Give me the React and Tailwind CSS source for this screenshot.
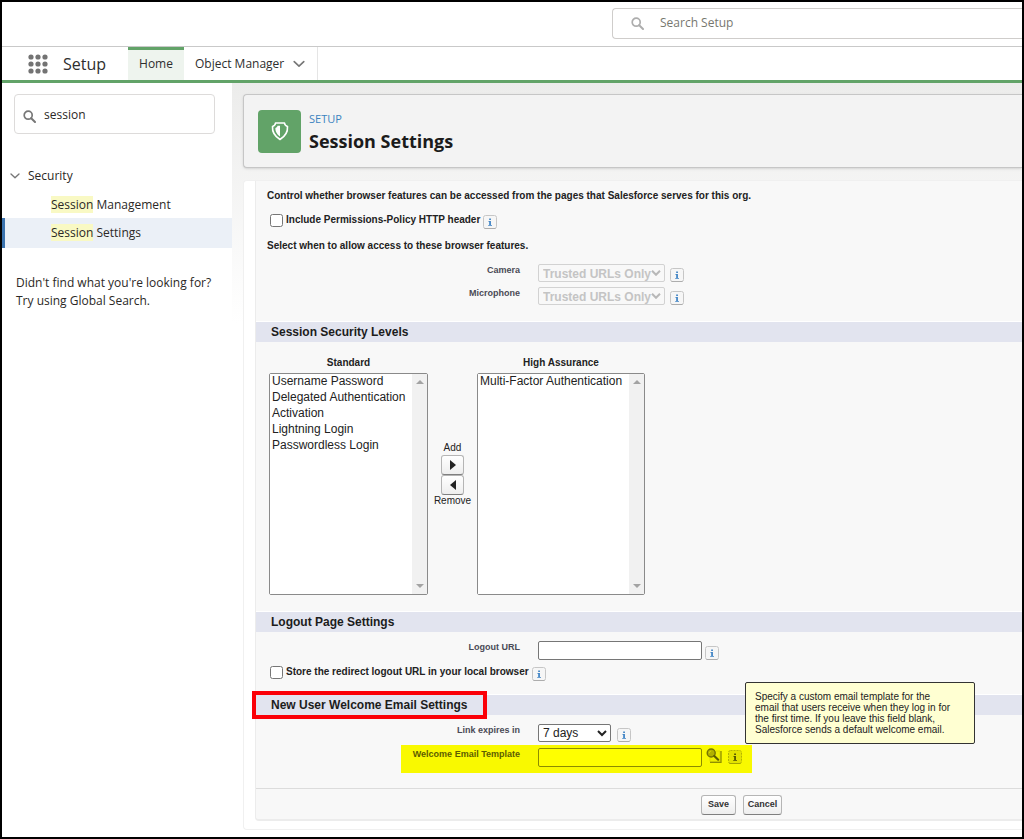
import React from "react";

const GREEN_ICON = "flex size-[43px] shrink-0 items-center justify-center rounded bg-[#62a368]";

function SearchIcon({ className }) {
  return (
    <svg viewBox="0 0 13 13" className={className} fill="none" stroke="currentColor" aria-hidden="true">
      <circle cx="5.2" cy="5.2" r="4" strokeWidth="1.7" />
      <path d="M8.2 8.2 12 12" strokeWidth="2" strokeLinecap="round" />
    </svg>
  );
}

function Chevron({ className }) {
  return (
    <svg viewBox="0 0 12 8" className={className} fill="none" stroke="#767676" strokeWidth="1.6" strokeLinecap="round" strokeLinejoin="round" aria-hidden="true">
      <path d="M1.2 1.6 6 6.2l4.800-4.600" />
    </svg>
  );
}

function InfoIcon({ tinted = false }) {
  return (
    <svg viewBox="0 0 14 14" className="size-3.5 shrink-0" role="img" aria-label="Info">
      <rect x=".5" y=".5" width="13" height="13" rx="2" fill={tinted ? "#e3e300" : "#f6f6f6"} stroke={tinted ? "#b4b400" : "#c6c6c6"} strokeDasharray={tinted ? "2 1" : undefined} />
      <path d="M1.500 13.500h11" stroke={tinted ? "#a5a500" : "#adadad"} />
      <path d="M6.200 3.500h1.700v1.500H6.200zM5.400 6h2.500v4H9v.8H5.200V10h1V6.800h-.8z" fill={tinted ? "#4a4a00" : "#3a80c4"} />
    </svg>
  );
}

function LookupIcon() {
  return (
    <svg viewBox="0 0 16 16" className="size-4 shrink-0" aria-hidden="true">
      <path d="M4 8v5.500h10V3h-4" fill="#eeee00" stroke="#dcdc00" />
      <path d="M4 14.300h11V3" fill="none" stroke="#8f8f00" strokeWidth="1.3" />
      <circle cx="5.200" cy="5" r="4" fill="#b0b000" stroke="#747400" strokeWidth="1.4" />
      <path d="M3.200 5.200a2.200 2.200 0 0 1 2-2.200" fill="none" stroke="#d8d800" />
      <path d="m8.300 8 3.900 3.700" stroke="#5e5e00" strokeWidth="2.200" strokeLinecap="round" />
    </svg>
  );
}

function SectionBar({ children, outlined = false }) {
  return (
    <div className="relative flex h-[21px] items-center border-t border-white bg-[#e2e4ef] pl-[15px]">
      <h2 className="text-xs font-bold text-[#1c1c1c]">{children}</h2>
      {outlined && <div className="absolute -top-[4px] -left-[4px] h-7 w-[235px] border-4 border-[#fb0007]" />}
    </div>
  );
}

function Field({ id, label, children }) {
  return (
    <div className="flex h-[23px] items-start gap-[18px]">
      <label htmlFor={id} className="w-[264px] text-right text-[9px] leading-[12px] font-bold text-[#4a4a56]">{label}</label>
      {children}
    </div>
  );
}

function PermissionSelect({ id }) {
  return (
    <div className="flex items-end gap-[5px]">
      <span className="relative flex">
        <select id={id} disabled className="h-[18px] w-[127px] appearance-none rounded-xs border border-[#d2d2d2] bg-[#f8f8f8] pl-1 text-[12px] font-bold text-[#c4c4c4] opacity-100">
          <option>Trusted URLs Only</option>
        </select>
        <svg viewBox="0 0 10 6" className="pointer-events-none absolute top-1.5 right-1 h-1.5 w-2.5" fill="none" stroke="#b8b8b8" strokeWidth="2" aria-hidden="true">
          <path d="M1 .8l4 4 4-4" />
        </svg>
      </span>
      <InfoIcon />
    </div>
  );
}

function CheckRow({ id, children }) {
  return (
    <div className="flex h-4 items-center pl-[14px]">
      <input id={id} type="checkbox" className="m-0 size-[13px]" />
      <label htmlFor={id} className="pl-[3px] text-[10px] leading-[12px] font-bold text-[#222]">{children}</label>
      <span className="mt-[3px] ml-[3px] flex"><InfoIcon /></span>
    </div>
  );
}

function ListBox({ id, label, options, className }) {
  return (
    <div className={className}>
      <label htmlFor={id} className="block pb-1 text-center text-[10px] leading-[12px] font-bold text-[#222]">{label}</label>
      <div className="flex h-[222px] rounded-xs border border-[#8a8a8a] bg-white">
        <select id={id} multiple className="min-w-0 grow overflow-hidden bg-white text-[12px] text-[#222]">
          {options.map((o) => (
            <option key={o} className="h-4 px-0.5 py-0 leading-4">{o}</option>
          ))}
        </select>
        <div className="flex w-[15px] shrink-0 flex-col items-center justify-between bg-[#f1f1f1] py-1.5">
          <svg viewBox="0 0 8 4" className="h-1 w-2" fill="#a3a3a3" aria-hidden="true"><path d="M0 4 4 0l4 4z" /></svg>
          <svg viewBox="0 0 8 4" className="h-1 w-2" fill="#a3a3a3" aria-hidden="true"><path d="M0 0l4 4 4-4z" /></svg>
        </div>
      </div>
    </div>
  );
}

const BUTTON = "flex items-center justify-center rounded-[3px] border border-[#b5b5b5] border-b-[#7f7f7f] bg-linear-to-b from-white to-[#eeeeee]";

function Sidebar() {
  return (
    <aside className="w-[230px] shrink-0 bg-white pt-[11px] text-[12px] text-[#2b2826]">
      <div className="mr-[17px] ml-3 flex h-10 items-center gap-2 rounded border border-[#dddbda] px-2">
        <SearchIcon className="mt-1 size-[13px] shrink-0 text-[#777]" />
        <input type="text" aria-label="Quick find" defaultValue="session" className="min-w-0 grow bg-transparent pt-0.5 outline-none" />
      </div>
      <nav className="pt-[27px]">
        <button type="button" className="flex h-[29px] items-center gap-2 pl-2">
          <Chevron className="h-2 w-2.5" />
          <span>Security</span>
        </button>
        <a href="#management" className="flex h-7 items-center pt-px pl-[49px]">
          <span><mark className="bg-[#f9f9c4] text-inherit">Session</mark> Management</span>
        </a>
        <a href="#settings" className="flex h-[30px] items-center border-l-[3px] border-[#3b73ae] bg-[#ebf0f7] pl-[46px]">
          <span><mark className="bg-[#f9f9c4] text-inherit">Session</mark> Settings</span>
        </a>
      </nav>
      <p className="pt-[26px] pl-3.5 leading-[18px]">Didn't find what you're looking for?<br />Try using Global Search.</p>
    </aside>
  );
}

export default function App() {
  return (
    <div className="flex min-h-screen flex-col overflow-hidden border-2 border-black bg-white font-['Open_Sans',sans-serif]">
      <header className="flex h-[45px] items-center justify-end border-b border-[#c9c9c9] pb-0.5">
        <div className="flex h-[31px] w-[410px] items-center gap-4 rounded-l border border-r-0 border-[#cfcdcb] pl-[18px]">
          <SearchIcon className="size-[13px] shrink-0 text-[#adadad]" />
          <input type="search" aria-label="Search Setup" placeholder="Search Setup" className="min-w-0 grow bg-transparent text-[12px] outline-none placeholder:text-[#77776f]" />
        </div>
      </header>

      <div className="flex h-9 border-b-[3px] border-[#62a368] text-[12px] text-[#2e2e2e]">
        <button type="button" aria-label="App launcher" className="ml-[26px] flex items-center">
          <svg viewBox="0 0 20 20" className="size-5" fill="#737373">
            {[3, 10, 17].map((y) => [3, 10, 17].map((x) => <circle key={x + "-" + y} cx={x} cy={y} r="2.600" />))}
          </svg>
        </button>
        <span className="flex w-20 items-center pl-[15px] text-[16px]">Setup</span>
        <a href="#home" className="flex w-14 items-center justify-center border-t-[3px] border-[#62a368] bg-[#eef4ee] pb-0.5">Home</a>
        <a href="#objects" className="flex w-[134px] items-center justify-between border-r border-[#e5e5e5] pr-3 pl-[11px]">
          Object Manager
          <Chevron className="h-2 w-3" />
        </a>
      </div>

      <div className="flex grow">
        <Sidebar />
        <main className="min-w-0 grow bg-linear-to-b from-[#ececeb] to-white to-[240px] pt-[11px] pl-[11px]">
          <div className="flex h-[74px] items-center gap-2 rounded-l border border-r-0 border-[#c6c6c6] bg-[#f3f3f3] pl-[14px] shadow-sm">
            <div className={GREEN_ICON}>
              <svg viewBox="0 0 20 20" className="size-5" fill="none" stroke="#fff" strokeWidth="1.600" strokeLinejoin="round" aria-hidden="true">
                <path d="M5.500 2h9q.2 2.600 3 3.500.6 8-7.500 13Q1.900 13.500 2.500 5.500 5.300 4.600 5.500 2Z" />
                <path d="M10 4.800v10.700C6.200 12.700 5.300 10 5.400 7 6.800 6.400 7.300 5.800 7.500 4.800Z" fill="#fff" stroke="none" />
              </svg>
            </div>
            <div className="pt-[3px]">
              <p className="text-[11px] leading-4 text-[#3c83c0]">SETUP</p>
              <h1 className="text-[18px] leading-7 font-bold text-[#1b1b1b]">Session Settings</h1>
            </div>
          </div>

          <div className="mt-3 rounded-l border border-r-0 border-[#f0f0f0] bg-white pb-2 pl-[11px] font-['Liberation_Sans',Arial,sans-serif]">
            <form className="rounded-bl border-b-2 border-l border-[#ececec] bg-[#f8f8f8]" onSubmit={(e) => e.preventDefault()}>
              <p className="pt-[9px] pl-[11px] text-[10px] leading-[12px] font-bold text-[#222]">Control whether browser features can be accessed from the pages that Salesforce serves for this org.</p>
              <div className="pt-2.5"><CheckRow id="policy">Include Permissions-Policy HTTP header</CheckRow></div>
              <p className="pt-3 pb-3 pl-[11px] text-[10px] leading-[12px] font-bold text-[#222]">Select when to allow access to these browser features.</p>
              <Field id="camera" label="Camera"><PermissionSelect id="camera" /></Field>
              <Field id="microphone" label="Microphone"><PermissionSelect id="microphone" /></Field>

              <div className="pt-[11px]"><SectionBar>Session Security Levels</SectionBar></div>
              <div className="flex items-center pt-[15px] pb-4 pl-[13px]">
                <ListBox id="standard" label="Standard" className="w-[159px]" options={["Username Password", "Delegated Authentication", "Activation", "Lightning Login", "Passwordless Login"]} />
                <div className="flex w-[49px] flex-col items-center pb-1 text-[10px] leading-[14px] text-[#222]">
                  <span>Add</span>
                  <button type="button" aria-label="Add" className={BUTTON + " h-5 w-[23px]"}>
                    <svg viewBox="0 0 6 10" className="h-2.5 w-1.5" fill="#222"><path d="M0 0l6 5-6 5z" /></svg>
                  </button>
                  <button type="button" aria-label="Remove" className={BUTTON + " h-5 w-[23px]"}>
                    <svg viewBox="0 0 6 10" className="h-2.5 w-1.5" fill="#222"><path d="M6 0L0 5l6 5z" /></svg>
                  </button>
                  <span className="leading-[12px]">Remove</span>
                </div>
                <ListBox id="assurance" label="High Assurance" className="w-[168px]" options={["Multi-Factor Authentication"]} />
              </div>

              <SectionBar>Logout Page Settings</SectionBar>
              <div className="pt-[9px] pb-[14px]">
                <Field id="logout" label="Logout URL">
                  <div className="flex items-end gap-[3px]">
                    <input id="logout" type="text" className="h-[19px] w-[164px] rounded-xs border border-[#767676] bg-white text-[12px]" />
                    <InfoIcon />
                  </div>
                </Field>
                <CheckRow id="redirect">Store the redirect logout URL in your local browser</CheckRow>
              </div>

              <SectionBar outlined>New User Welcome Email Settings</SectionBar>
              <div className="pt-[9px] pb-[15px]">
                <div className="h-[21px]">
                  <Field id="expires" label="Link expires in">
                    <div className="flex items-end gap-1.5">
                      <select id="expires" defaultValue="7" className="h-[18px] w-[73px] rounded-xs border border-[#767676] bg-white text-[12px] text-[#222]">
                        <option value="7">7 days</option>
                      </select>
                      <InfoIcon />
                    </div>
                  </Field>
                </div>
                <div className="ml-[145px] flex h-7 w-[351px] items-start bg-[#f9f900] pt-[3px]">
                  <label htmlFor="template" className="w-[119px] text-right text-[9px] leading-[12px] font-bold whitespace-nowrap text-[#5d5d00]">Welcome Email Template</label>
                  <input id="template" type="text" className="ml-[18px] h-[19px] w-[164px] rounded-xs border border-[#8c8c00] bg-[#ffff00] text-[12px]" />
                  <button type="button" aria-label="Look up template" className="ml-1 flex"><LookupIcon /></button>
                  <span className="relative mt-0.5 ml-1.5 flex">
                    <InfoIcon tinted />
                    <span role="tooltip" className="absolute bottom-5 left-[17px] w-[230px] rounded-xs border border-[#333] bg-[#ffffd2] py-2 pr-5 pl-[9px] text-[10px] leading-[11px] text-[#222]">
                      Specify a custom email template for the email that users receive when they log in for the first time. If you leave this field blank, Salesforce sends a default welcome email.
                    </span>
                  </span>
                </div>
              </div>

              <div className="flex gap-[7px] border-t border-[#dcdcdc] pt-1.5 pb-1 pl-[445px] text-[9px] font-bold text-[#333]">
                <button type="submit" className={BUTTON + " h-5 w-[35px]"}>Save</button>
                <button type="button" className={BUTTON + " h-5 w-[39px]"}>Cancel</button>
              </div>
            </form>
          </div>
        </main>
      </div>
    </div>
  );
}
